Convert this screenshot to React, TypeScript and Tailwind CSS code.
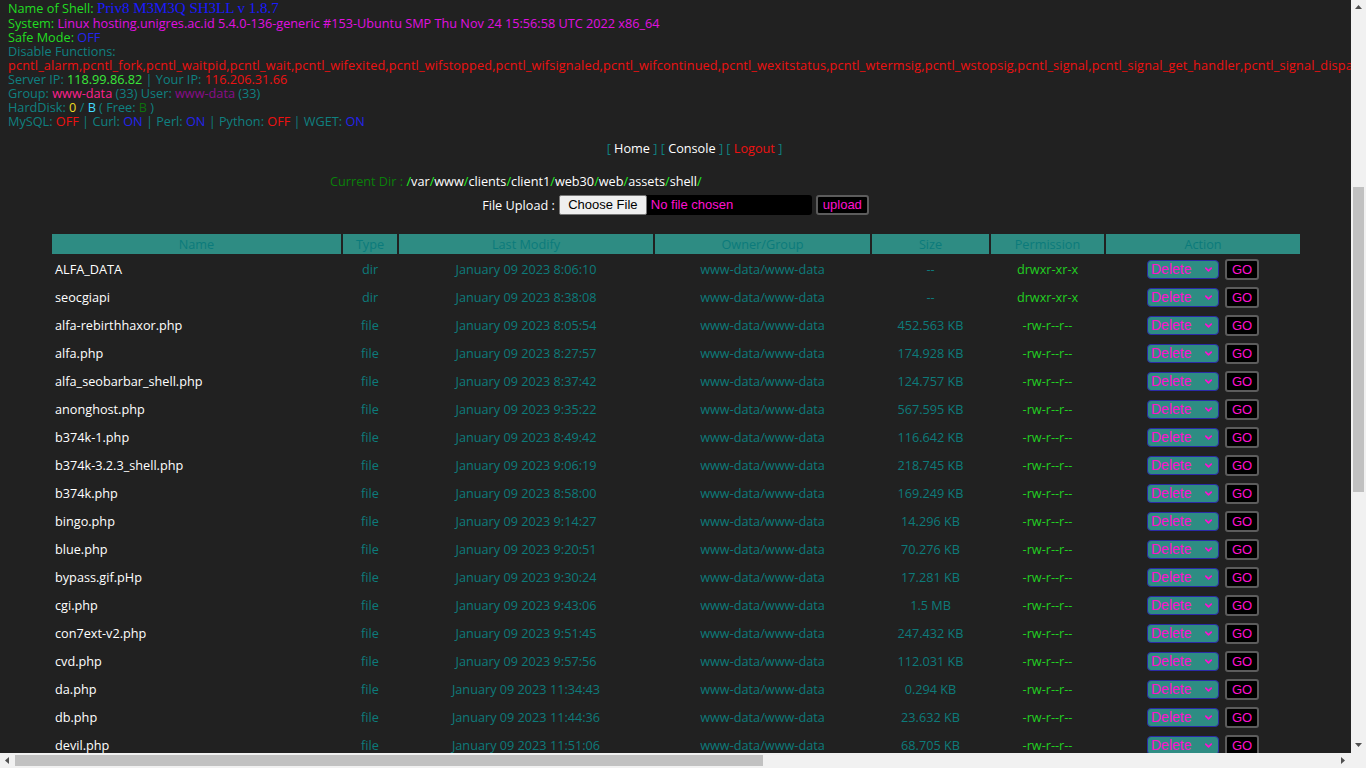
import { ChevronDown } from "lucide-react";

type Row = {
  name: string;
  type: string;
  date: string;
  size: string;
  perm: string;
};

const rows: Row[] = [
  { name: "ALFA_DATA", type: "dir", date: "January 09 2023 8:06:10", size: "--", perm: "drwxr-xr-x" },
  { name: "seocgiapi", type: "dir", date: "January 09 2023 8:38:08", size: "--", perm: "drwxr-xr-x" },
  { name: "alfa-rebirthhaxor.php", type: "file", date: "January 09 2023 8:05:54", size: "452.563 KB", perm: "-rw-r--r--" },
  { name: "alfa.php", type: "file", date: "January 09 2023 8:27:57", size: "174.928 KB", perm: "-rw-r--r--" },
  { name: "alfa_seobarbar_shell.php", type: "file", date: "January 09 2023 8:37:42", size: "124.757 KB", perm: "-rw-r--r--" },
  { name: "anonghost.php", type: "file", date: "January 09 2023 9:35:22", size: "567.595 KB", perm: "-rw-r--r--" },
  { name: "b374k-1.php", type: "file", date: "January 09 2023 8:49:42", size: "116.642 KB", perm: "-rw-r--r--" },
  { name: "b374k-3.2.3_shell.php", type: "file", date: "January 09 2023 9:06:19", size: "218.745 KB", perm: "-rw-r--r--" },
  { name: "b374k.php", type: "file", date: "January 09 2023 8:58:00", size: "169.249 KB", perm: "-rw-r--r--" },
  { name: "bingo.php", type: "file", date: "January 09 2023 9:14:27", size: "14.296 KB", perm: "-rw-r--r--" },
  { name: "blue.php", type: "file", date: "January 09 2023 9:20:51", size: "70.276 KB", perm: "-rw-r--r--" },
  { name: "bypass.gif.pHp", type: "file", date: "January 09 2023 9:30:24", size: "17.281 KB", perm: "-rw-r--r--" },
  { name: "cgi.php", type: "file", date: "January 09 2023 9:43:06", size: "1.5 MB", perm: "-rw-r--r--" },
  { name: "con7ext-v2.php", type: "file", date: "January 09 2023 9:51:45", size: "247.432 KB", perm: "-rw-r--r--" },
  { name: "cvd.php", type: "file", date: "January 09 2023 9:57:56", size: "112.031 KB", perm: "-rw-r--r--" },
  { name: "da.php", type: "file", date: "January 09 2023 11:34:43", size: "0.294 KB", perm: "-rw-r--r--" },
  { name: "db.php", type: "file", date: "January 09 2023 11:44:36", size: "23.632 KB", perm: "-rw-r--r--" },
  { name: "devil.php", type: "file", date: "January 09 2023 11:51:06", size: "68.705 KB", perm: "-rw-r--r--" },
];

const disabled =
  "pcntl_alarm,pcntl_fork,pcntl_waitpid,pcntl_wait,pcntl_wifexited,pcntl_wifstopped,pcntl_wifsignaled,pcntl_wifcontinued,pcntl_wexitstatus,pcntl_wtermsig,pcntl_wstopsig,pcntl_signal,pcntl_signal_get_handler,pcntl_signal_dispatch,pcntl_get_last_error,pcntl_strerror,pcntl_sigprocmask,pcntl_sigwaitinfo,pcntl_sigtimedwait,pcntl_exec,pcntl_getpriority,pcntl_setpriority,pcntl_async_signals,pcntl_unshare,";

function Sep() {
  return <span className="text-[#22ee22]">/</span>;
}

function ActionCell() {
  return (
    <div className="flex items-center justify-center gap-[6px] font-['Liberation_Sans',Arial,sans-serif]">
      <div className="flex items-center justify-between w-[72px] h-[19px] pl-[3px] pr-[4px] bg-[#2e8c83] border border-[#2b2ba6] rounded-[4px] text-[14px] leading-none text-[#ff10d0]">
        <span>Delete</span>
        <ChevronDown size={11} strokeWidth={3.5} className="text-[#ff10d0]" />
      </div>
      <div className="flex items-center justify-center w-[34px] h-[21px] bg-black border-2 border-[#5c5c5c] rounded-[3px] text-[13px] leading-none text-[#ff10d0]">
        GO
      </div>
    </div>
  );
}

// the browser's classic scrollbars, as they show in the screenshot
function Arrow({ dir }: { dir: "up" | "down" | "left" | "right" }) {
  const pts = {
    up: "1,6 4.5,2 8,6",
    down: "1,2 4.5,6 8,2",
    left: "6,1 2,4.5 6,8",
    right: "2,1 6,4.5 2,8",
  }[dir];
  return (
    <svg width="9" height="9" viewBox="0 0 9 9">
      <polygon points={pts} fill="#505050" />
    </svg>
  );
}

function Page() {
  return (
    <div className="font-['Open_Sans',sans-serif] text-[12.7px] leading-[14px]">
      <div className="pl-[8px]">
        <div className="h-[16px] leading-[16px] whitespace-nowrap">
          <span className="text-[#22dd22]">Name of Shell: </span>
          <span className="font-['Liberation_Serif',serif] text-[15px] text-[#1a1aff]">Priv8 M3M3Q SH3LL v 1.8.7</span>
        </div>
        <div className="whitespace-nowrap">
          <span className="text-[#22dd22]">System: </span>
          <span className="text-[#e010e0]">Linux hosting.unigres.ac.id 5.4.0-136-generic #153-Ubuntu SMP Thu Nov 24 15:56:58 UTC 2022 x86_64</span>
        </div>
        <div>
          <span className="text-[#22dd22]">Safe Mode: </span>
          <span className="text-[#2424ee]">OFF</span>
        </div>
        <div className="text-[#0f8080]">Disable Functions:</div>
        <div className="whitespace-nowrap tracking-[0.16px] text-[#ee1111]">{disabled}</div>
        <div className="text-[#0f8080]">
          Server IP: <span className="text-[#3ae83a]">118.99.86.82</span> | Your IP:{" "}
          <span className="text-[#ee1111]">116.206.31.66</span>
        </div>
        <div className="text-[#0f8080]">
          Group: <span className="text-[#ff2090]">www-data</span> (33) User:{" "}
          <span className="text-[#8b0d8b]">www-data</span> (33)
        </div>
        <div className="text-[#0f8080]">
          HardDisk: <span className="text-[#eedd22]">0</span> / <span className="text-[#44ddff]">B</span> ( Free:{" "}
          <span className="text-[#0d700d]">B</span> )
        </div>
        <div className="text-[#0f8080]">
          MySQL: <span className="text-[#ee1111]">OFF</span> | Curl: <span className="text-[#2424ee]">ON</span> | Perl:{" "}
          <span className="text-[#2424ee]">ON</span> | Python: <span className="text-[#ee1111]">OFF</span> | WGET:{" "}
          <span className="text-[#2424ee]">ON</span>
        </div>
      </div>

      <div className="mt-[12px] h-[16px] leading-[16px] flex justify-center pl-[38px] whitespace-pre">
        <span className="text-[#0f8080]">[ </span>
        <span className="text-white">Home</span>
        <span className="text-[#0f8080]"> ] [ </span>
        <span className="text-white">Console</span>
        <span className="text-[#0f8080]"> ] [ </span>
        <span className="text-[#ee1111]">Logout</span>
        <span className="text-[#0f8080]"> ]</span>
      </div>

      <div className="mt-[18px] ml-[330px] whitespace-nowrap text-white">
        <span className="text-[#0a800a]">Current Dir : </span>
        <Sep />var<Sep />www<Sep />clients<Sep />client1<Sep />web30<Sep />web<Sep />assets<Sep />shell<Sep />
      </div>

      <div className="mt-[6px] flex items-center justify-center gap-[4px] h-[22px]">
        <span className="text-white">File Upload :</span>
        <div className="flex items-center w-[253px] h-[20px] bg-black rounded-[3px] font-['Liberation_Sans',Arial,sans-serif] text-[13px]">
          <div className="flex items-center justify-center w-[88px] h-[20px] bg-[#efefef] border border-[#767676] rounded-[2px] text-black">
            Choose File
          </div>
          <span className="ml-[4px] text-[#ff10d0]">No file chosen</span>
        </div>
        <div className="flex items-center justify-center w-[53px] h-[20px] bg-black border-2 border-[#5c5c5c] rounded-[3px] font-['Liberation_Sans',Arial,sans-serif] text-[13px] text-[#ff10d0]">
          upload
        </div>
      </div>

      <table className="mt-[16px] ml-[50px] table-fixed border-separate border-spacing-[2px]">
        <thead>
          <tr className="h-[20px] bg-[#2e8c83] text-[#0b7b7b]">
            <th className="w-[289px] font-normal">Name</th>
            <th className="w-[54px] font-normal">Type</th>
            <th className="w-[254px] font-normal">Last Modify</th>
            <th className="w-[215px] font-normal">Owner/Group</th>
            <th className="w-[117px] font-normal">Size</th>
            <th className="w-[113px] font-normal">Permission</th>
            <th className="w-[194px] font-normal">Action</th>
          </tr>
        </thead>
        <tbody>
          {rows.map((r) => (
            <tr key={r.name} className="h-[26px]">
              <td className="pl-[3px] text-white">{r.name}</td>
              <td className="text-center text-[#0d7b7b]">{r.type}</td>
              <td className="text-center text-[#0d7b7b]">{r.date}</td>
              <td className="text-center text-[#0d7b7b]">www-data/www-data</td>
              <td className="text-center text-[#0d7b7b]">{r.size}</td>
              <td className="text-center text-[#22d022]">{r.perm}</td>
              <td>
                <ActionCell />
              </td>
            </tr>
          ))}
        </tbody>
      </table>
    </div>
  );
}

export default function App() {
  return (
    <div className="h-screen flex flex-col bg-[#212121]">
      <div className="flex-1 flex min-h-0">
        <div className="flex-1 overflow-hidden">
          <Page />
        </div>
        <div className="w-[15px] flex flex-col items-center bg-[#f1f1f1]">
          <div className="h-[15px] flex items-center justify-center">
            <Arrow dir="up" />
          </div>
          <div className="mt-[172px] w-[11px] h-[305px] bg-[#c1c1c1]" />
          <div className="flex-1" />
          <div className="h-[15px] flex items-center justify-center">
            <Arrow dir="down" />
          </div>
        </div>
      </div>
      <div className="h-[15px] flex items-center bg-[#f1f1f1]">
        <div className="w-[15px] flex justify-center">
          <Arrow dir="left" />
        </div>
        <div className="w-[748px] h-[11px] bg-[#c1c1c1]" />
        <div className="flex-1" />
        <div className="w-[15px] flex justify-center">
          <Arrow dir="right" />
        </div>
        <div className="w-[15px] h-[15px] bg-[#f1f1f1]" />
      </div>
    </div>
  );
}
